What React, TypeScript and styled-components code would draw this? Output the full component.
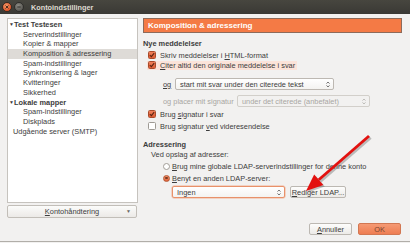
import React from 'react';
import styled, { createGlobalStyle, css } from 'styled-components';

const GlobalStyle = createGlobalStyle`
  html, body {
    margin: 0;
    padding: 0;
    background: #f2f1f0;
  }
  body {
    font-family: "Liberation Sans", Arial, sans-serif;
    font-size: 7.4px;
    color: #3c3c3c;
  }
  * {
    box-sizing: border-box;
  }
`;

// Window chrome
const Window = styled.div`
  position: relative;
  width: 410px;
  height: 242px;
  display: flex;
  flex-direction: column;
  background: #f2f1f0;
  border-bottom: 1px solid #b1aea9;
  overflow: hidden;
`;

const TitleBar = styled.div`
  height: 14px;
  flex: none;
  display: flex;
  align-items: center;
  padding-left: 2px;
  background: linear-gradient(#47463f, #3a3935);
`;

const WinButton = styled.span<{ $close?: boolean }>`
  width: 10px;
  height: 10px;
  border-radius: 50%;
  margin-right: 2px;
  display: flex;
  align-items: center;
  justify-content: center;
  ${(p) =>
    p.$close
      ? css`
          background: radial-gradient(circle at 40% 35%, #f59b6a, #e0562a 70%);
          border: 1px solid #3a2a22;
        `
      : css`
          background: radial-gradient(circle at 40% 35%, #8c8a84, #5b5a55 70%);
          border: 1px solid #2f2e2b;
        `}
`;

const Title = styled.span`
  margin-left: 5px;
  font-weight: bold;
  font-size: 7.3px;
  color: #dfdbd2;
`;

const Body = styled.div`
  flex: 1;
  display: flex;
`;

// Left side: account tree
const Sidebar = styled.div`
  width: 143px;
  flex: none;
  padding: 4px 0 0 7px;
  display: flex;
  flex-direction: column;
`;

const Tree = styled.ul`
  width: 131px;
  height: 185px;
  margin: 0;
  padding: 1px 0 0;
  list-style: none;
  background: #fff;
  border: 1px solid #c6c3be;
`;

const TreeRow = styled.li<{ $indent: number; $selected?: boolean }>`
  height: 9.7px;
  line-height: 9.7px;
  display: flex;
  align-items: center;
  padding-left: ${(p) => p.$indent}px;
  white-space: nowrap;
  font-weight: ${(p) => (p.$indent === 1 ? 'bold' : 'normal')};
  background: ${(p) => (p.$selected ? '#dedbd7' : 'transparent')};
`;

const Expander = styled.span`
  width: 5px;
  font-size: 5px;
  margin-right: 0;
  color: #3c3c3c;
`;

const ComboButton = styled.div`
  margin-top: 2px;
  width: 130px;
  height: 13px;
  position: relative;
  display: flex;
  align-items: center;
  justify-content: center;
  border: 1px solid #c2beb8;
  border-radius: 2px;
  background: linear-gradient(#fbfbfa, #eceae7);
`;

const ComboArrow = styled.span`
  position: absolute;
  right: 5px;
  top: 2px;
  font-size: 5px;
  color: #6b6964;
`;

// Right side: settings page
const Main = styled.div`
  width: 259px;
  flex: none;
  padding-top: 4px;
  display: flex;
  flex-direction: column;
`;

const PageHeader = styled.div`
  height: 15px;
  display: flex;
  align-items: center;
  padding-left: 4px;
  background: #f47a45;
  border: 1px solid #8d6a5a;
  color: #fff;
  font-weight: bold;
  font-size: 8px;
`;

const SectionTitle = styled.div<{ $mt: number }>`
  margin-top: ${(p) => p.$mt}px;
  height: 10px;
  line-height: 10px;
  font-weight: bold;
`;

const SubLabel = styled.div`
  height: 9px;
  line-height: 9px;
  padding-left: 8px;
`;

const CheckRow = styled.div<{ $mt: number }>`
  margin-top: ${(p) => p.$mt}px;
  height: 10px;
  padding-left: 4px;
  display: flex;
  align-items: center;
`;

const CheckLabel = styled.label<{ $focus?: boolean }>`
  height: 9px;
  display: inline-flex;
  align-items: center;
  gap: 4px;
  padding: 0 2px 0 1px;
  white-space: nowrap;
  background: ${(p) => (p.$focus ? '#fbe3d9' : 'transparent')};
`;

const Box = styled.span<{ $checked?: boolean }>`
  width: 8px;
  height: 8px;
  flex: none;
  border-radius: 1.5px;
  display: flex;
  align-items: center;
  justify-content: center;
  ${(p) =>
    p.$checked
      ? css`
          background: linear-gradient(#f0805a, #dc5a32);
          border: 1px solid #a94a2a;
        `
      : css`
          background: #fff;
          border: 1px solid #9e9a94;
        `}
`;

const OptionRow = styled.div<{ $mt: number }>`
  margin-top: ${(p) => p.$mt}px;
  height: 12px;
  padding-left: 20px;
  display: flex;
  align-items: center;
`;

const OptionLabel = styled.span<{ $disabled?: boolean; $w: number }>`
  width: ${(p) => p.$w}px;
  flex: none;
  color: ${(p) => (p.$disabled ? '#a8a6a2' : '#3c3c3c')};
`;

const Select = styled.div<{ $w: number; $disabled?: boolean; $focus?: boolean }>`
  width: ${(p) => p.$w}px;
  height: 12px;
  flex: none;
  display: flex;
  align-items: center;
  justify-content: space-between;
  padding: 0 3px 0 4px;
  border-radius: 2px;
  color: ${(p) => (p.$disabled ? '#a8a6a2' : '#3c3c3c')};
  border: 1px solid ${(p) => (p.$focus ? '#e8916a' : p.$disabled ? '#d2cfca' : '#bdb8b2')};
  background: ${(p) => (p.$disabled ? '#f2f1f0' : 'linear-gradient(#ffffff, #f4f3f1)')};
  box-shadow: ${(p) => (p.$focus ? '0 0 0 0.5px #f2b496' : 'none')};
`;

const Spinner = styled.svg`
  width: 4px;
  height: 7px;
  flex: none;
`;

const RadioRow = styled.div<{ $mt: number }>`
  margin-top: ${(p) => p.$mt}px;
  height: 10px;
  padding-left: 20px;
  display: flex;
  align-items: center;
  gap: 2px;
  white-space: nowrap;
`;

const Radio = styled.span<{ $checked?: boolean }>`
  width: 7px;
  height: 7px;
  flex: none;
  border-radius: 50%;
  display: flex;
  align-items: center;
  justify-content: center;
  ${(p) =>
    p.$checked
      ? css`
          background: linear-gradient(#f3906a, #e2653c);
          border: 1px solid #b45632;
        `
      : css`
          background: #fff;
          border: 1px solid #a19d97;
        `}
`;

const RadioDot = styled.span`
  width: 2.5px;
  height: 2.5px;
  border-radius: 50%;
  background: #7a3a20;
`;

const LdapRow = styled.div`
  margin-top: 3px;
  height: 12px;
  padding-left: 29px;
  display: flex;
  gap: 5px;
`;

const Button = styled.div<{ $w: number; $primary?: boolean }>`
  width: ${(p) => p.$w}px;
  height: 12px;
  flex: none;
  display: flex;
  align-items: center;
  justify-content: center;
  border-radius: 2px;
  ${(p) =>
    p.$primary
      ? css`
          color: #7a4430;
          background: linear-gradient(#f59a74, #ee7d52);
          border: 1px solid #d27752;
        `
      : css`
          color: #3c3c3c;
          background: linear-gradient(#fdfdfc, #eceae7);
          border: 1px solid #bcb8b2;
        `}
`;

const Footer = styled.div`
  margin-top: 25px;
  display: flex;
  justify-content: flex-end;
  gap: 6px;
  padding-right: 1px;
`;

const U = styled.span`
  text-decoration: underline;
  text-underline-offset: 1px;
`;

const ArrowLayer = styled.svg`
  position: absolute;
  left: 0;
  top: 0;
  width: 410px;
  height: 243px;
  pointer-events: none;
`;

const CheckMark = () => (
  <svg width="6" height="6" viewBox="0 0 6 6">
    <path d="M0.8 3.1 L2.4 4.6 L5.2 1.2" fill="none" stroke="#5a2412" strokeWidth="1.1" />
  </svg>
);

const Updown = () => (
  <Spinner viewBox="0 0 4 7">
    <path d="M0.5 2.6 L2 1 L3.5 2.6 M0.5 4.4 L2 6 L3.5 4.4" fill="none" stroke="currentColor" strokeWidth="0.7" />
  </Spinner>
);

const tree = [
  { label: 'Test Testesen', indent: 1, open: true },
  { label: 'Serverindstillinger', indent: 15 },
  { label: 'Kopier & mapper', indent: 15 },
  { label: 'Komposition & adressering', indent: 15, selected: true },
  { label: 'Spam-indstillinger', indent: 15 },
  { label: 'Synkronisering & lager', indent: 15 },
  { label: 'Kvitteringer', indent: 15 },
  { label: 'Sikkerhed', indent: 15 },
  { label: 'Lokale mapper', indent: 1, open: true },
  { label: 'Spam-indstillinger', indent: 15 },
  { label: 'Diskplads', indent: 15 },
  { label: 'Udgående server (SMTP)', indent: 5 },
];

const App = (): JSX.Element => {
  return (
    <>
      <GlobalStyle />
      <Window>
        <TitleBar>
          <WinButton $close>
            <svg width="4" height="4" viewBox="0 0 4 4">
              <path d="M0.5 0.5 L3.5 3.5 M3.5 0.5 L0.5 3.5" stroke="#3b2217" strokeWidth="0.9" />
            </svg>
          </WinButton>
          <WinButton>
            <svg width="4" height="2" viewBox="0 0 4 2">
              <path d="M0.3 1 L3.7 1" stroke="#2f2e2b" strokeWidth="1" />
            </svg>
          </WinButton>
          <Title>Kontoindstillinger</Title>
        </TitleBar>
        <Body>
          <Sidebar>
            <Tree>
              {tree.map((item, i) => (
                <TreeRow key={i} $indent={item.indent} $selected={item.selected}>
                  {item.open && <Expander>▼</Expander>}
                  <span style={item.open ? { marginLeft: 0 } : undefined}>{item.label}</span>
                </TreeRow>
              ))}
            </Tree>
            <ComboButton>
              <span>
                <U>K</U>ontohåndtering
              </span>
              <ComboArrow>▼</ComboArrow>
            </ComboButton>
          </Sidebar>
          <Main>
            <PageHeader>Komposition &amp; adressering</PageHeader>
            <SectionTitle $mt={6}>Nye meddelelser</SectionTitle>
            <CheckRow $mt={1}>
              <CheckLabel>
                <Box $checked>
                  <CheckMark />
                </Box>
                <span>
                  Skriv meddelelser i <U>H</U>TML-format
                </span>
              </CheckLabel>
            </CheckRow>
            <CheckRow $mt={0}>
              <CheckLabel $focus>
                <Box $checked>
                  <CheckMark />
                </Box>
                <span>
                  <U>C</U>iter altid den originale meddelelse i svar
                </span>
              </CheckLabel>
            </CheckRow>
            <OptionRow $mt={8}>
              <OptionLabel $w={12}>
                <U>og</U>
              </OptionLabel>
              <Select $w={159}>
                <span>start mit svar under den citerede tekst</span>
                <Updown />
              </Select>
            </OptionRow>
            <OptionRow $mt={5}>
              <OptionLabel $disabled $w={74}>
                og placer mit signatur
              </OptionLabel>
              <Select $w={133} $disabled>
                <span>under det citerede (anbefalet)</span>
                <Updown />
              </Select>
            </OptionRow>
            <CheckRow $mt={2}>
              <CheckLabel>
                <Box $checked>
                  <CheckMark />
                </Box>
                <span>
                  Brug <U>s</U>ignatur i svar
                </span>
              </CheckLabel>
            </CheckRow>
            <CheckRow $mt={2}>
              <CheckLabel>
                <Box />
                <span>
                  Brug signatur <U>v</U>ed videresendelse
                </span>
              </CheckLabel>
            </CheckRow>
            <SectionTitle $mt={9}>Adressering</SectionTitle>
            <SubLabel>Ved opslag af adresser:</SubLabel>
            <RadioRow $mt={2}>
              <Radio />
              <span>
                <U>B</U>rug mine globale LDAP-serverindstillinger for denne konto
              </span>
            </RadioRow>
            <RadioRow $mt={2}>
              <Radio $checked>
                <RadioDot />
              </Radio>
              <span>
                <U>B</U>enyt en anden LDAP-server:
              </span>
            </RadioRow>
            <LdapRow>
              <Select $w={113} $focus>
                <span>Ingen</span>
                <Updown />
              </Select>
              <Button $w={56}>
                <span>
                  <U>R</U>ediger LDAP...
                </span>
              </Button>
            </LdapRow>
            <Footer>
              <Button $w={43}>
                <span>
                  <U>A</U>nnuller
                </span>
              </Button>
              <Button $w={43} $primary>
                OK
              </Button>
            </Footer>
          </Main>
        </Body>
        <ArrowLayer viewBox="0 0 410 243">
          <g transform="translate(1.5 1.5)" opacity="0.35">
            <line x1="369" y1="136" x2="318.8" y2="179.8" stroke="#555" strokeWidth="3.2" />
            <polygon points="306,191 323.4,185.1 314.2,174.5" fill="#555" />
          </g>
          <line x1="369" y1="136" x2="318.8" y2="179.8" stroke="#e3110f" strokeWidth="2.8" />
          <polygon points="306,191 323.4,185.1 314.2,174.5" fill="#e3110f" />
        </ArrowLayer>
      </Window>
    </>
  );
};

export default App;
